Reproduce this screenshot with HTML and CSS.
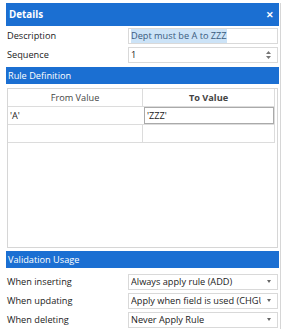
FILE: index.html
```html
<!DOCTYPE html>
<html lang="en">
<head>
    <meta charset="UTF-8">
    <title>Details</title>
    <link rel="stylesheet" href="styles.css">
</head>
<body>
    <div class="panel">
        <div class="title-bar">
            <span>Details</span>
            <span class="close">&#x2715;</span>
        </div>
        <div class="body">
            <div class="field">
                <label>Description</label>
                <div class="input"><span class="selected">Dept must be A to ZZZ</span></div>
            </div>
            <div class="field">
                <label>Sequence</label>
                <div class="input spin">
                    <span>1</span>
                    <svg width="5" height="8" viewBox="0 0 5 8"><path d="M2.5 0L5 3H0z M2.5 8L5 5H0z" fill="#777"/></svg>
                </div>
            </div>

            <div class="section">Rule Definition</div>
            <div class="grid">
                <div class="grid-row head">
                    <div class="cell">From Value</div>
                    <div class="cell bold">To Value</div>
                </div>
                <div class="grid-row">
                    <div class="cell left">'A'</div>
                    <div class="cell left focus">'ZZZ'</div>
                </div>
                <div class="grid-row">
                    <div class="cell"></div>
                    <div class="cell"></div>
                </div>
            </div>

            <div class="section">Validation Usage</div>
            <div class="field">
                <label>When inserting</label>
                <div class="input combo"><span>Always apply rule (ADD)</span><i class="arrow"></i></div>
            </div>
            <div class="field">
                <label>When updating</label>
                <div class="input combo"><span>Apply when field is used (CHGUSE)</span><i class="arrow"></i></div>
            </div>
            <div class="field">
                <label>When deleting</label>
                <div class="input combo"><span>Never Apply Rule</span><i class="arrow"></i></div>
            </div>
        </div>
    </div>
</body>
</html>
```

FILE: styles.css
```css
body {
    margin: 0;
    background: #fff;
    font-family: "Open Sans", "Noto Sans", sans-serif;
    font-size: 9.2px;
    color: #222;
}
.panel {
    margin: 3px 1px 0 6px;
    border-right: 1px solid #d6d6d6;
    height: 326px;
    box-sizing: border-box;
}
.title-bar {
    background: #1b6fd2;
    color: #fff;
    font-weight: bold;
    height: 23px;
    display: flex;
    align-items: center;
    justify-content: space-between;
    padding: 0 5px 0 3px;
    margin-right: 1px;
    font-size: 9.8px;
}
.close {
    font-size: 9px;
    font-weight: bold;
}
.body {
    padding-right: 2px;
}
.field {
    display: flex;
    align-items: center;
    height: 19px;
}
.field label {
    width: 121px;
    padding-left: 1px;
}
.input {
    flex: 1;
    height: 16px;
    border: 1px solid #d9d9d9;
    box-sizing: border-box;
    display: flex;
    align-items: center;
    padding: 0 3px 0 2px;
    white-space: nowrap;
    overflow: hidden;
}
.input span {
    flex: 1;
    overflow: hidden;
}
.selected {
    flex: none !important;
    background: #cce3f7;
    color: #3a5b80;
    padding: 1px 0;
}
.spin svg {
    margin-right: 3px;
}
.arrow {
    width: 0;
    height: 0;
    border-left: 2.5px solid transparent;
    border-right: 2.5px solid transparent;
    border-top: 3px solid #666;
    margin: 0 3px 0 6px;
}
.section {
    background: #1b6fd2;
    color: #fff;
    height: 17px;
    line-height: 17px;
    padding-left: 2px;
    margin: 3px -1px 4px 0;
}
.grid {
    margin-left: 1px;
    height: 160px;
    border: 1px solid #d6d6d6;
    box-sizing: border-box;
    margin-bottom: 3px;
}
.grid-row {
    display: flex;
    height: 17px;
    border-bottom: 1px solid #dcdcdc;
    margin-right: 2px;
    border-right: 1px solid #dcdcdc;
}
.cell {
    width: 134px;
    text-align: center;
    line-height: 17px;
}
.cell + .cell {
    flex: 1;
    border-left: 1px solid #dcdcdc;
}
.head .cell {
    color: #444;
}
.bold {
    font-weight: bold;
}
.left {
    text-align: left;
    padding-left: 2px;
}
.focus {
    outline: 1px solid #aaa;
    outline-offset: -1px;
}
```
